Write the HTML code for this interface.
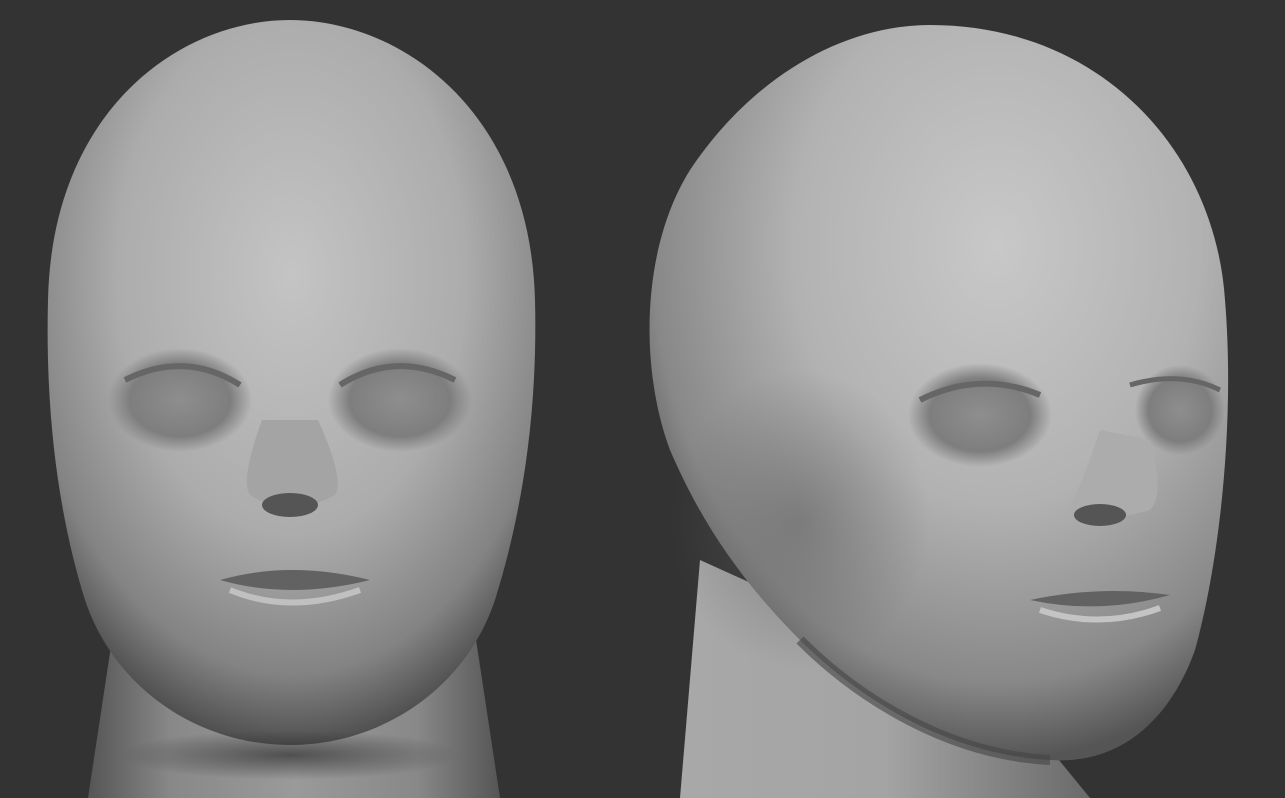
<!DOCTYPE html>
<html><head><meta charset="utf-8"><style>
html,body{margin:0;padding:0;background:#333333;width:1285px;height:798px;overflow:hidden}
svg{display:block}
</style></head><body>
<svg width="1285" height="798" viewBox="0 0 1285 798" xmlns="http://www.w3.org/2000/svg">
<defs>
<radialGradient id="lh" cx="0.5" cy="0.35" r="0.65">
<stop offset="0" stop-color="#c4c4c4"/><stop offset="0.55" stop-color="#acacac"/><stop offset="0.85" stop-color="#838383"/><stop offset="1" stop-color="#505050"/>
</radialGradient>
<radialGradient id="rh" cx="0.6" cy="0.3" r="0.7">
<stop offset="0" stop-color="#c8c8c8"/><stop offset="0.5" stop-color="#b2b2b2"/><stop offset="0.85" stop-color="#888"/><stop offset="1" stop-color="#555"/>
</radialGradient>
<linearGradient id="ln" x1="0" y1="0" x2="1" y2="0">
<stop offset="0" stop-color="#555"/><stop offset="0.2" stop-color="#888"/><stop offset="0.5" stop-color="#9a9a9a"/><stop offset="0.8" stop-color="#888"/><stop offset="1" stop-color="#555"/>
</linearGradient>
<linearGradient id="rn" x1="0" y1="0" x2="1" y2="0">
<stop offset="0" stop-color="#a8a8a8"/><stop offset="0.5" stop-color="#a4a4a4"/><stop offset="1" stop-color="#6a6a6a"/>
</linearGradient>
<radialGradient id="eye" cx="0.5" cy="0.5" r="0.5">
<stop offset="0" stop-color="#8e8e8e"/><stop offset="0.7" stop-color="#7e7e7e"/><stop offset="1" stop-color="#7e7e7e" stop-opacity="0"/>
</radialGradient>
<radialGradient id="sh" cx="0.5" cy="0.5" r="0.5">
<stop offset="0" stop-color="#303030" stop-opacity="0.7"/><stop offset="1" stop-color="#303030" stop-opacity="0"/>
</radialGradient>
<radialGradient id="jaw" cx="0.5" cy="0.5" r="0.5">
<stop offset="0" stop-color="#606060" stop-opacity="0.5"/><stop offset="1" stop-color="#606060" stop-opacity="0"/>
</radialGradient>
</defs>
<path d="M118 600 L470 600 L500 798 L88 798 Z" fill="url(#ln)"/>
<path d="M290 20 C400 20 530 110 535 300 C538 420 520 520 495 600 C465 690 380 745 290 745 C200 745 115 690 85 600 C60 520 45 420 48 300 C52 110 180 20 290 20 Z" fill="url(#lh)"/>
<ellipse cx="290" cy="755" rx="170" ry="25" fill="url(#sh)"/>
<ellipse cx="180" cy="400" rx="72" ry="52" fill="url(#eye)"/>
<ellipse cx="400" cy="400" rx="72" ry="52" fill="url(#eye)"/>
<path d="M125 380 Q185 350 240 385" stroke="#666" stroke-width="6" fill="none"/>
<path d="M340 385 Q395 350 455 380" stroke="#666" stroke-width="6" fill="none"/>
<path d="M262 420 Q240 480 250 495 Q290 520 335 495 Q345 480 318 420" fill="#a4a4a4"/>
<ellipse cx="290" cy="505" rx="28" ry="12" fill="#555"/>
<path d="M220 580 Q290 560 370 580 Q290 600 220 580 Z" fill="#626262"/>
<path d="M230 590 Q290 615 360 590" stroke="#c0c0c0" stroke-width="6" fill="none"/>
<path d="M700 560 L1010 700 L1090 798 L680 798 Z" fill="url(#rn)"/>
<path d="M930 25 C1100 25 1215 150 1225 300 C1235 420 1220 560 1195 650 C1170 720 1120 765 1050 760 C950 755 860 700 800 640 C740 580 700 520 670 450 C640 370 640 250 690 170 C750 80 840 25 930 25 Z" fill="url(#rh)"/>
<ellipse cx="800" cy="520" rx="130" ry="150" fill="url(#jaw)"/>
<ellipse cx="980" cy="415" rx="72" ry="52" fill="url(#eye)"/>
<ellipse cx="1180" cy="410" rx="45" ry="45" fill="url(#eye)"/>
<path d="M920 400 Q980 370 1040 395" stroke="#666" stroke-width="6" fill="none"/>
<path d="M1130 385 Q1180 370 1220 390" stroke="#666" stroke-width="5" fill="none"/>
<path d="M1100 430 Q1080 490 1070 505 Q1100 525 1150 510 Q1165 495 1150 440" fill="#acacac"/>
<ellipse cx="1100" cy="515" rx="26" ry="11" fill="#555"/>
<path d="M1030 600 Q1100 585 1170 595 Q1100 615 1030 600 Z" fill="#626262"/>
<path d="M1040 610 Q1100 630 1160 608" stroke="#c4c4c4" stroke-width="6" fill="none"/>
<path d="M800 640 C860 700 950 755 1050 760" stroke="#444" stroke-width="10" fill="none" opacity="0.6"/>
</svg>
</body></html>
